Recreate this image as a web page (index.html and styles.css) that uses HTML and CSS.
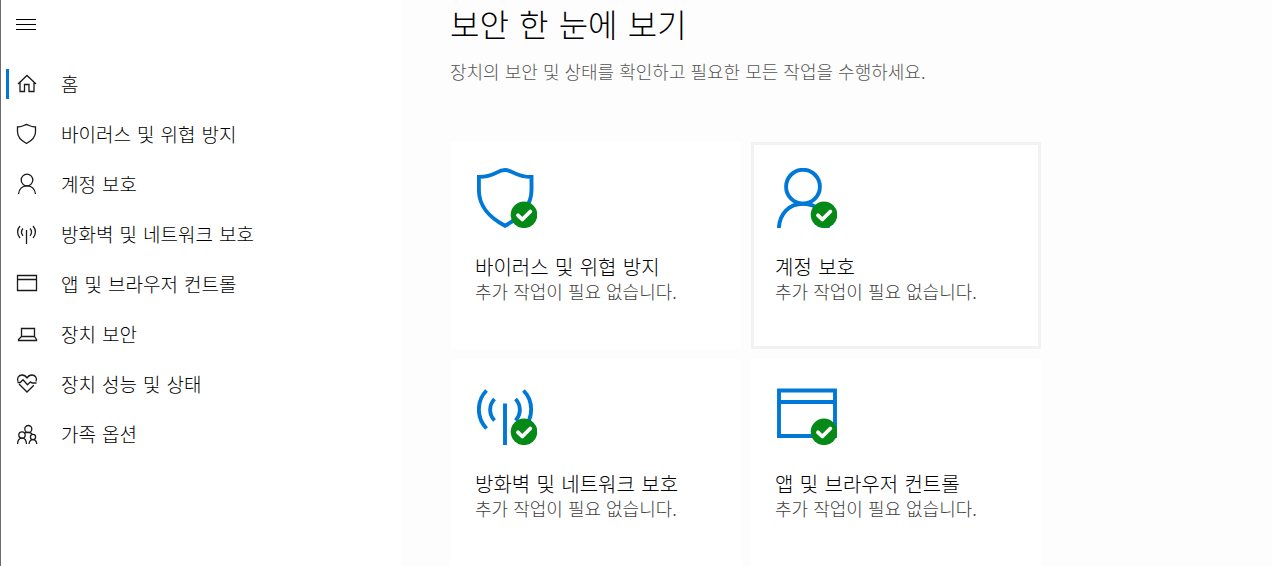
FILE: index.html
```html
<!DOCTYPE html>
<html lang="ko">
<head>
<meta charset="utf-8">
<title>보안 한 눈에 보기</title>
<link rel="stylesheet" href="styles.css">
</head>
<body>
<svg class="defs" aria-hidden="true">
  <defs>
    <g id="check">
      <circle cx="47" cy="46.800" r="13.3" fill="#058a17"/>
      <path d="M41 47.300l4.300 4.200 8-8" fill="none" stroke="#fff" stroke-width="3.800" stroke-linecap="round" stroke-linejoin="round"/>
    </g>
  </defs>
</svg>
<div class="app">
  <aside class="sidebar">
    <button class="menu" type="button" aria-label="메뉴">
      <svg class="icon" viewBox="0 0 22 22"><path d="M0 5.500h20M0 10.500h20M0 15.500h20"/></svg>
    </button>
    <nav class="nav">
      <a class="item active" href="#"><svg class="icon" viewBox="0 0 22 22"><path d="M2 11L11 2.500l9 8.500M4 9.500v9h4.500v-7h4.500v7h5v-9"/></svg><span>홈</span></a>
      <a class="item" href="#"><svg class="icon" viewBox="0 0 22 22"><path d="M10.500 1.500C8.500 1.500 7.500 4 1.500 4v5c0 5 3.500 8.500 9 11.500 5.500-3 9-6.500 9-11.500V4c-6 0-7-2.500-9-2.500z"/></svg><span>바이러스 및 위협 방지</span></a>
      <a class="item" href="#"><svg class="icon" viewBox="0 0 22 22"><circle cx="11" cy="7" r="5.800"/><path d="M2.500 21c.5-5 4-8.200 8.500-8.200s8 3.200 8.500 8.200"/></svg><span>계정 보호</span></a>
      <a class="item" href="#"><svg class="icon" viewBox="0 0 22 22"><path d="M10.500 7v14M4 3C.8 6.500.8 11.500 4 15M7 5.500c-2 2.300-2 5 0 7.300M14 5.500c2 2.300 2 5 0 7.300M17 3c3.200 3.500 3.200 8.500 0 12"/></svg><span>방화벽 및 네트워크 보호</span></a>
      <a class="item" href="#"><svg class="icon" viewBox="0 0 22 22"><path d="M1.500 2.500h19v15h-19zM1.500 6.500h19"/></svg><span>앱 및 브라우저 컨트롤</span></a>
      <a class="item" href="#"><svg class="icon" viewBox="0 0 22 22"><path d="M5.500 5.500h13v8h-13zM5.500 13.500l-3 3v1h18v-1l-2-3"/></svg><span>장치 보안</span></a>
      <a class="item" href="#"><svg class="icon" viewBox="0 0 22 22"><path d="M2 8.500C.5 5 3 2 6 2c2.200 0 3.800 1 5 3 1.200-2 2.800-3 5-3 3 0 5.500 3 4 6.500M1.500 9.500h2.700L7 6.800l4.500 5 3-3L16 10h4.500M3 11l8 8 6.800-6.800"/></svg><span>장치 성능 및 상태</span></a>
      <a class="item" href="#"><svg class="icon" viewBox="0 0 22 22"><circle cx="12.300" cy="6" r="3.500"/><circle cx="6" cy="12" r="3.200"/><circle cx="17" cy="14" r="2.600"/><path d="M1.500 21c.3-3.500 1.800-5.800 4.500-5.800s4.300 2.300 4.500 5.800M13 21c.3-2.800 1.500-4.400 4-4.400s3.500 1.600 3.700 4.400M8.500 10c.8-.5 2-.6 3.800-.6 2 0 3.200.7 4 2"/></svg><span>가족 옵션</span></a>
    </nav>
  </aside>
  <main class="content">
    <h1>보안 한 눈에 보기</h1>
    <p class="lead">장치의 보안 및 상태를 확인하고 필요한 모든 작업을 수행하세요.</p>
    <div class="cards">
      <a class="card" href="#">
        <svg class="art" viewBox="0 0 60 60"><path d="M28 2C19.500 2 18.500 9 1.900 9v13C1.900 37 10 48 28 57.800 46 48 54.500 37 54.500 22V9C37.500 9 36.500 2 28 2z"/><use href="#check"/></svg>
        <h2>바이러스 및 위협 방지</h2><p>추가 작업이 필요 없습니다.</p>
      </a>
      <a class="card selected" href="#">
        <svg class="art" viewBox="0 0 60 60"><circle cx="26" cy="18.700" r="16.900"/><path d="M1.900 60C2.500 46 12 35.800 26 35.800S50 46 51 60"/><use href="#check"/></svg>
        <h2>계정 보호</h2><p>추가 작업이 필요 없습니다.</p>
      </a>
      <a class="card" href="#">
        <svg class="art" viewBox="0 0 60 60"><path d="M28 18.500V60M9.500 5.500C-.7 16-.7 33 9.500 43.500M17.500 14c-5.800 6-5.800 15.500 0 21.500M38.500 14c5.800 6 5.800 15.500 0 21.500M46.500 5.500C56.700 16 56.700 33 46.500 43.500"/><use href="#check"/></svg>
        <h2>방화벽 및 네트워크 보호</h2><p>추가 작업이 필요 없습니다.</p>
      </a>
      <a class="card" href="#">
        <svg class="art" viewBox="0 0 60 60"><path d="M2 5.500h56v45.500H2zM2 17h56"/><use href="#check"/></svg>
        <h2>앱 및 브라우저 컨트롤</h2><p>추가 작업이 필요 없습니다.</p>
      </a>
    </div>
  </main>
</div>
</body>
</html>
```

FILE: styles.css
```css
* { box-sizing: border-box; }
body {
  margin: 0;
  background: #fff;
  color: #000;
  font-family: "DejaVu Sans", "Noto Sans CJK KR", sans-serif;
  font-weight: 300;
}
h1, h2, p { margin: 0; font-weight: 300; }
a { color: inherit; text-decoration: none; }
.defs { position: absolute; width: 0; height: 0; }
.app {
  display: grid;
  grid-template-columns: minmax(260px, 400px) 1fr;
  height: 100vh;
  overflow: hidden;
  border-left: 1px solid #6b6b6b;
}
.menu {
  display: block;
  margin: 0;
  padding: 14px 15px;
  border: 0;
  background: none;
}
.icon {
  display: block;
  flex: none;
  width: 22px;
  height: 22px;
  fill: none;
  stroke: #1a1a1a;
  stroke-width: 1.3;
}
.menu .icon { stroke: #000; stroke-width: 1; }
.nav { display: flex; flex-direction: column; padding: 19px 0 0 5px; }
.item {
  display: flex;
  align-items: center;
  gap: 23px;
  height: 30px;
  margin-bottom: 20px;
  padding-left: 10px;
  font-size: 19px;
  line-height: 30px;
}
.item span { padding-top: 2px; }
.active { border-left: 3px solid #0078d7; padding-left: 7px; }
.content { padding: 5px 48px 0 49px; background: #fdfdfd; }
h1 { font-size: 32px; line-height: 42px; }
.lead {
  margin-top: 12px;
  color: #555;
  font-family: "Noto Sans CJK KR", sans-serif;
  font-size: 18px;
  line-height: 24px;
}
.cards {
  display: grid;
  grid-template-columns: repeat(auto-fit, 290px);
  gap: 10px;
  max-width: 600px;
  margin-top: 59px;
  padding-left: 1px;
}
.card {
  min-height: 207px;
  padding: 23px 21px;
  border: 3px solid #fff;
  background: #fff;
}
.selected { border-color: #f2f2f2; }
.art {
  display: block;
  width: 60px;
  height: 60px;
  margin: 0 0 27px 2px;
  fill: none;
  stroke: #0078d7;
  stroke-width: 3.900;
}
.art use { stroke: none; }
h2 { font-size: 20px; line-height: 26px; }
.card p {
  color: #404040;
  font-family: "Noto Sans CJK KR", sans-serif;
  font-size: 18px;
  line-height: 20px;
}
```
